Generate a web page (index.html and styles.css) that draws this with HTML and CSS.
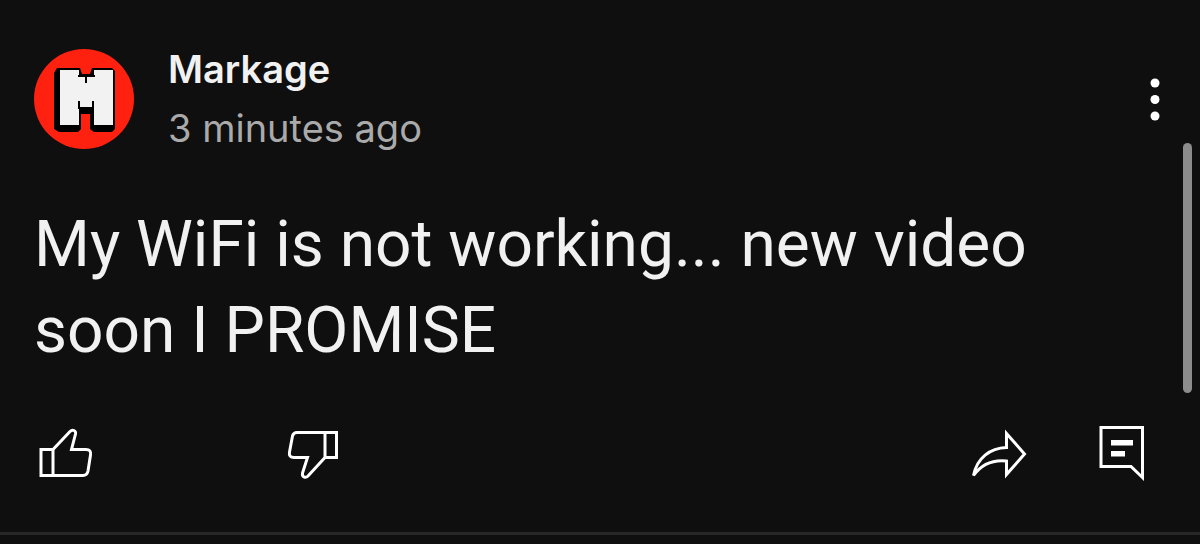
FILE: index.html
```
<!DOCTYPE html>
<html lang="en">
<head>
    <meta charset="UTF-8">
    <meta name="viewport" content="width=device-width, initial-scale=1.0">
    <title>Markage</title>
    <link rel="stylesheet" href="styles.css">
</head>
<body>
    <article class="post">
        <header class="post-header">
            <svg class="avatar" viewBox="0 0 100 100" role="img" aria-label="Markage">
                <circle cx="50" cy="50" r="50" fill="#ff210f"/>
                <path fill="#000" d="M23 19H46L48 25H56L58 19H78L81 22V80L78 83H60L56 80V65H47V80L44 83H25L20 80V24Z"/>
                <path fill="#f2f2f2" d="M26 21H45V27H60V21H79V76H60V59H45V76H26Z"/>
                <path fill="none" stroke="#000" stroke-width="2" d="M44 27H61M52 27V34M45 52V59H59V52"/>
            </svg>
            <div class="author">
                <h1 class="name">Markage</h1>
                <p class="time">3 minutes ago</p>
            </div>
            <button class="menu" aria-label="More options">
                <svg viewBox="0 0 40 60">
                    <circle cx="20" cy="14" r="4.5"/>
                    <circle cx="20" cy="30.500" r="4.5"/>
                    <circle cx="20" cy="47" r="4.5"/>
                </svg>
            </button>
        </header>
        <p class="text">My WiFi is not working... new video soon I PROMISE</p>
        <div class="actions">
            <button class="action" aria-label="Like">
                <svg viewBox="0 0 64 64">
                    <path d="M7 25.500H19L36 7.500Q38 5.500 40 6.500Q42 7.500 41.500 10L37.500 25.500H52Q57.500 25.500 56.500 31L54 47Q53 51.500 49 51.500H7ZM19 25.500V51.500"/>
                </svg>
            </button>
            <button class="action" aria-label="Dislike">
                <svg viewBox="0 0 64 64">
                    <path d="M54.500 8.500H15Q11.500 8.500 10.500 12L7.500 28Q6.500 33.500 12 33.500H25.500L20.500 49Q20 52 22 53Q24 54 26 52L43 33.500H54.500ZM43 8.500V33.500"/>
                </svg>
            </button>
            <button class="action share" aria-label="Share">
                <svg viewBox="0 0 64 64">
                    <path d="M40.500 9.500L58.500 30L40.500 50.500V37C26 35.500 15 41 7.500 51.500C11 34 24 24 40.500 23.500Z"/>
                </svg>
            </button>
            <button class="action" aria-label="Comments">
                <svg viewBox="0 0 64 64">
                    <path d="M11 3.500H52.500V53.500L41 42.500H11Z"/>
                    <path class="lines" d="M21 16H43V21.500H21ZM21 27H35V32.500H21Z"/>
                </svg>
            </button>
        </div>
    </article>
    <div class="scroll-thumb"></div>
</body>
</html>
```
FILE: styles.css
```
*{
    margin: 0;
    padding: 0;
    box-sizing: border-box;
}
body{
    background-color: #0f0f0f;
    color: #f1f1f1;
    font-family: Inter, "Liberation Sans", sans-serif;
}
button{
    border: none;
    background: none;
    cursor: pointer;
}
svg{
    display: block;
}

.post{
    padding-top: 40px;
    padding-bottom: 44px;
    border-bottom: 3px solid #272727;
}
.post-header{
    display: flex;
    align-items: center;
    padding: 0 25px 0 34px;
}
.avatar{
    width: 100px;
    height: 100px;
    flex-shrink: 0;
}
.author{
    flex: 1;
    padding-left: 34px;
}
.name{
    font-size: 38px;
    line-height: 59px;
    font-weight: 600;
}
.time{
    font-size: 38px;
    line-height: 59px;
    color: #aaa;
}
.menu svg{
    width: 40px;
    height: 60px;
    fill: #fff;
}

.text{
    padding: 0 100px 0 34px;
    margin-top: 44px;
    font-family: Roboto, "Liberation Sans", sans-serif;
    font-size: 64px;
    line-height: 86px;
}

.actions{
    display: flex;
    padding: 0 46px 0 34px;
    margin-top: 50px;
}
.action{
    margin-right: 184px;
}
.action svg{
    width: 64px;
    height: 64px;
    fill: none;
    stroke: #fff;
    stroke-width: 3;
}
.share{
    margin-left: auto;
    margin-right: 60px;
}
.action:last-child{
    margin-right: 0;
}
.action .lines{
    fill: #fff;
    stroke: none;
}

/* floating scroll indicator */
.scroll-thumb{
    position: absolute;
    top: 143px;
    right: 8px;
    width: 9px;
    height: 250px;
    border-radius: 5px;
    background-color: #8c8c8c;
}
```
